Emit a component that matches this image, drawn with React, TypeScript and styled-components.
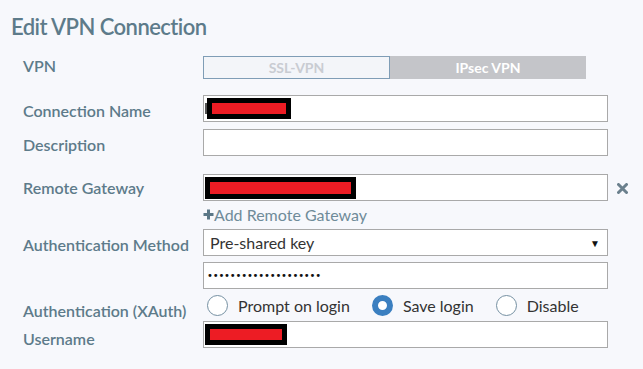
import React from "react";
import styled, { createGlobalStyle } from "styled-components";

const Global = createGlobalStyle`
  html, body { margin: 0; padding: 0; background: #f7f8fc; }
  * { box-sizing: border-box; }
`;

const Page = styled.div`
  min-height: 100vh;
  background: #f7f8fc;
  font-family: Lato, "Open Sans", sans-serif;
  color: #333;
`;

const Title = styled.h1`
  margin: 0;
  padding: 13px 0 0 11px;
  font-size: 22px;
  line-height: 27px;
  font-weight: 600;
  letter-spacing: -0.55px;
  color: #5d7b8a;
`;

const Form = styled.div`
  padding-left: 23px;
`;

const Row = styled.div<{ $mt: number; $h?: number }>`
  display: grid;
  grid-template-columns: 180px 405px auto;
  align-items: start;
  margin-top: ${(p) => p.$mt}px;
  ${(p) => (p.$h ? `height: ${p.$h}px;` : "")}
`;

const Label = styled.div<{ $pt: number }>`
  padding-top: ${(p) => p.$pt}px;
  font-size: 16px;
  line-height: 19px;
  font-weight: 600;
  color: #5d7b8a;
  white-space: nowrap;
`;

const Toggle = styled.div`
  display: flex;
  height: 23px;
`;

const ToggleOption = styled.div<{ $active?: boolean; $w: number }>`
  width: ${(p) => p.$w}px;
  display: flex;
  align-items: center;
  justify-content: center;
  font-size: 14px;
  font-weight: 700;
  ${(p) =>
    p.$active
      ? `background: #f3f5f9; border: 1px solid #7f9db6; color: #c9ccd2;`
      : `background: #c4c5c9; color: #ffffff;`}
`;

const Field = styled.div`
  height: 27px;
  background: #fff;
  border: 1px solid #a9a9a9;
  display: flex;
  align-items: center;
  padding-left: 1px;
  font-size: 16px;
  color: #333;
`;

const Caret = styled.span`
  width: 2px;
  height: 11px;
  background: #555;
`;

const Redacted = styled.span<{ $w: number; $h: number }>`
  display: inline-block;
  width: ${(p) => p.$w}px;
  height: ${(p) => p.$h}px;
  border: 5px solid #000;
  background: #ed1c24;
`;

const SelectBox = styled(Field)`
  padding-left: 6px;
  justify-content: space-between;
  padding-right: 7px;
`;

const Arrow = styled.span`
  font-size: 10px;
  color: #111;
`;

const Dots = styled.span`
  font-size: 10px;
  letter-spacing: -0.2px;
  color: #111;
  padding-left: 2px;
  font-family: "DejaVu Sans", sans-serif;
`;

const RemoveBtn = styled.span`
  margin-left: 9px;
  margin-top: 9px;
  display: inline-flex;
  color: #6b808d;
`;

const AddLink = styled.div`
  display: flex;
  align-items: center;
  font-size: 16px;
  line-height: 19px;
  color: #6f8b99;
`;

const Plus = styled.span`
  display: inline-flex;
  color: #5b7786;
`;

const RadioGroup = styled.div`
  display: flex;
  align-items: center;
  height: 20px;
  padding-left: 4px;
  white-space: nowrap;
`;

const RadioItem = styled.label`
  display: flex;
  align-items: center;
  margin-right: 22px;
  font-size: 16px;
  color: #333;
`;

const Circle = styled.span<{ $on?: boolean }>`
  width: 21px;
  height: 21px;
  border-radius: 50%;
  margin-right: 10px;
  background: #fff;
  border: ${(p) => (p.$on ? "6px solid #3b7fc0" : "1.2px solid #7590a2")};
`;

const Radio = ({ label, on }: { label: string; on?: boolean }) => (
  <RadioItem>
    <Circle $on={on} />
    {label}
  </RadioItem>
);

export default function App() {
  return (
    <Page>
      <Global />
      <Title>Edit VPN Connection</Title>
      <Form>
        <Row $mt={16}>
          <Label $pt={0}>VPN</Label>
          <Toggle>
            <ToggleOption $active $w={187}>SSL-VPN</ToggleOption>
            <ToggleOption $w={196}>IPsec VPN</ToggleOption>
          </Toggle>
        </Row>
        <Row $mt={16}>
          <Label $pt={6}>Connection Name</Label>
          <Field>
            <Caret />
            <Redacted $w={84} $h={21} />
          </Field>
        </Row>
        <Row $mt={7}>
          <Label $pt={6}>Description</Label>
          <Field />
        </Row>
        <Row $mt={18}>
          <Label $pt={4}>Remote Gateway</Label>
          <Field>
            <Redacted $w={151} $h={22} />
          </Field>
          <RemoveBtn>
            <svg width="11" height="11" viewBox="0 0 11 11">
              <path d="M1.5 1.5 L9.5 9.5 M9.5 1.5 L1.5 9.5" stroke="currentColor" strokeWidth="3" strokeLinecap="round" />
            </svg>
          </RemoveBtn>
        </Row>
        <Row $mt={4}>
          <span />
          <AddLink>
            <Plus>
              <svg width="11" height="11" viewBox="0 0 11 11">
                <path d="M5.5 0.5 V10.5 M0.5 5.5 H10.5" stroke="currentColor" strokeWidth="3" />
              </svg>
            </Plus>
            Add Remote Gateway
          </AddLink>
        </Row>
        <Row $mt={5}>
          <Label $pt={6}>Authentication Method</Label>
          <SelectBox>
            Pre-shared key
            <Arrow>▼</Arrow>
          </SelectBox>
        </Row>
        <Row $mt={6}>
          <span />
          <Field>
            <Dots>••••••••••••••••••••</Dots>
          </Field>
        </Row>
        <Row $mt={6} $h={20}>
          <Label $pt={6}>Authentication (XAuth)</Label>
          <RadioGroup>
            <Radio label="Prompt on login" />
            <Radio label="Save login" on />
            <Radio label="Disable" />
          </RadioGroup>
        </Row>
        <Row $mt={6}>
          <Label $pt={8}>Username</Label>
          <Field>
            <Redacted $w={82} $h={21} />
          </Field>
        </Row>
      </Form>
    </Page>
  );
}
